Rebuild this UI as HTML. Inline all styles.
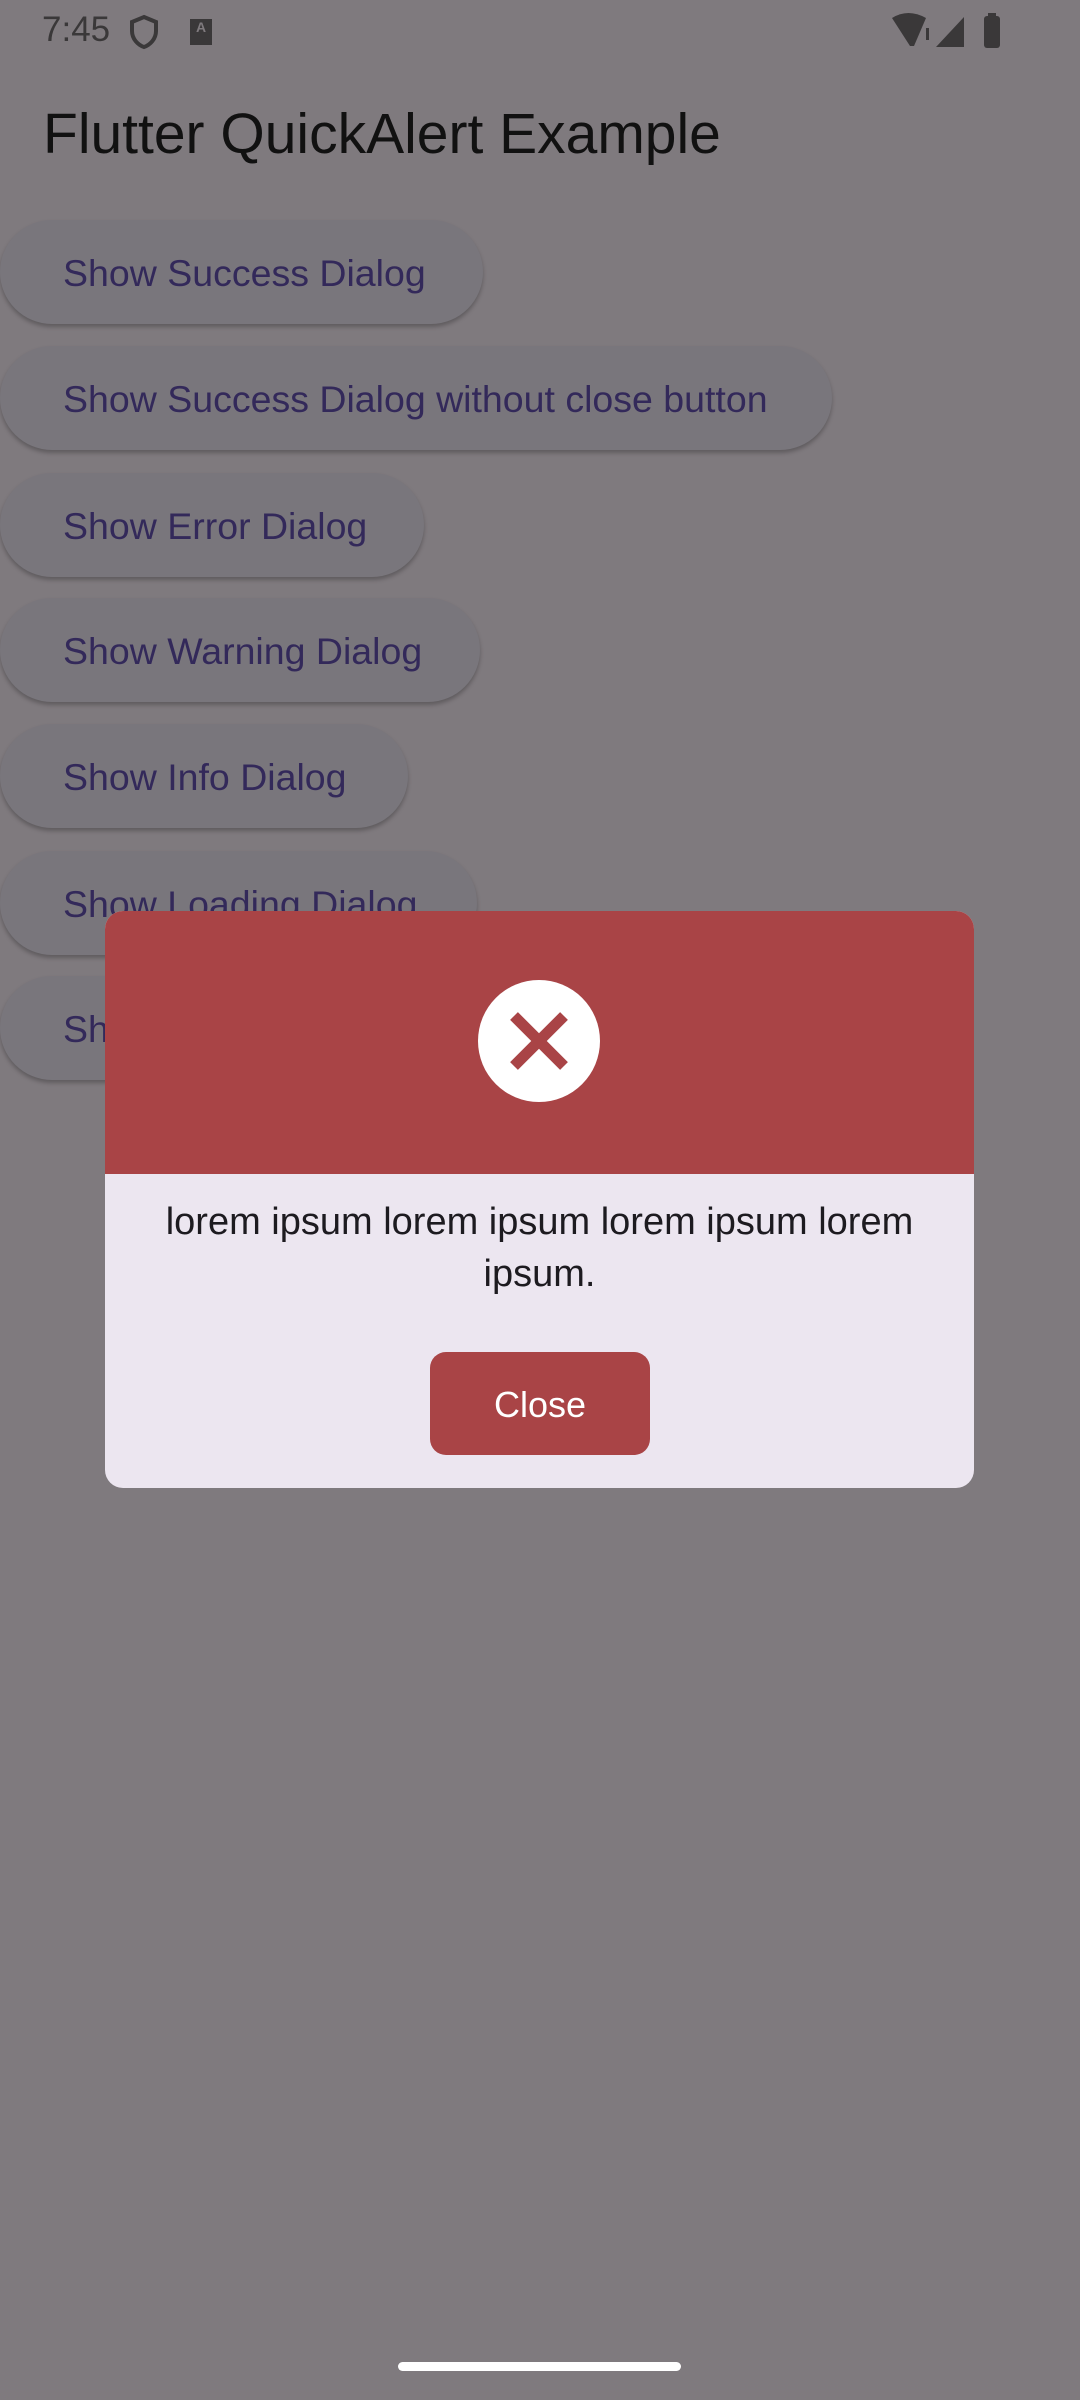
<!DOCTYPE html>
<html><head><meta charset="utf-8"><style>
body{margin:0;width:1080px;height:2400px;background:#7f7a7e;position:relative;overflow:hidden;font-family:"Liberation Sans",sans-serif}
.btn{position:absolute;left:0;height:104px;border-radius:52px;background:#79767c;box-shadow:0 3px 4px rgba(0,0,0,.25);color:#33295a;font-size:37.5px;line-height:106px;padding-left:63px;box-sizing:border-box;white-space:nowrap;overflow:hidden}
</style></head><body>
<div style="position:absolute;left:42px;top:10px;font-size:35px;color:#3a3839">7:45</div>
<svg style="position:absolute;left:127px;top:14px" width="34" height="36" viewBox="0 0 34 36"><path d="M17 3 L29 8 V17 C29 25 23 31 17 33 C11 31 5 25 5 17 V8 Z" fill="none" stroke="#3a3839" stroke-width="4"/></svg>
<div style="position:absolute;left:190px;top:19px;width:22px;height:26px;background:#3a3839;color:#7f7a7e;font-size:14px;text-align:center;font-weight:bold">A</div>
<svg style="position:absolute;left:890px;top:12px" width="120" height="40" viewBox="0 0 120 40"><path d="M2 6 Q18 -4 36 6 L24 34 H20 Z" fill="#3a3839"/><rect x="36" y="16" width="3" height="12" fill="#3a3839"/><path d="M46 35 L74 5 V35 Z" fill="#3a3839"/><rect x="94" y="4" width="16" height="32" rx="3" fill="#3a3839"/><rect x="98" y="1" width="8" height="4" fill="#3a3839"/></svg>
<div style="position:absolute;left:43px;top:101px;font-size:57px;color:#111">Flutter QuickAlert Example</div>
<div class="btn" style="top:220px;width:483px">Show Success Dialog</div>
<div class="btn" style="top:346px;width:832px">Show Success Dialog without close button</div>
<div class="btn" style="top:473px;width:424px">Show Error Dialog</div>
<div class="btn" style="top:598px;width:480px">Show Warning Dialog</div>
<div class="btn" style="top:724px;width:408px">Show Info Dialog</div>
<div class="btn" style="top:851px;width:477px">Show Loading Dialog</div>
<div class="btn" style="top:976px;width:470px">Show Custom Dialog</div>
<div style="position:absolute;left:105px;top:911px;width:869px;height:577px;border-radius:18px;overflow:hidden;background:#ece6f0">
 <div style="height:263px;background:#a94446;position:relative">
  <svg style="position:absolute;left:373px;top:69px" width="122" height="122" viewBox="0 0 122 122"><circle cx="61" cy="61" r="61" fill="#fff"/><path d="M36 36 L86 86 M86 36 L36 86" stroke="#a94446" stroke-width="11"/></svg>
 </div>
 <div style="text-align:center;font-size:38px;line-height:52px;color:#1d1b20;padding:22px 40px 0">lorem ipsum lorem ipsum lorem ipsum lorem ipsum.</div>
 <div style="position:absolute;left:325px;top:441px;width:220px;height:103px;border-radius:16px;background:#a94446;color:#fff;font-size:36px;line-height:105px;text-align:center">Close</div>
</div>
<div style="position:absolute;left:398px;top:2362px;width:283px;height:9px;border-radius:5px;background:#fff"></div>
</body></html>
